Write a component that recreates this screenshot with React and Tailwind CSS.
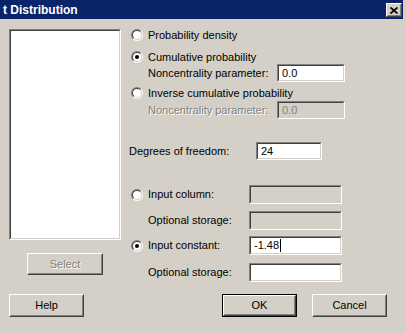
import React from "react";

function Sunken({ className = "", children, disabled, white = true }) {
  return (
    <div className={`border border-t-[#808080] border-l-[#808080] border-b-white border-r-white ${className}`}>
      <div
        className={`h-full w-full border border-t-[#404040] border-l-[#404040] border-b-[#d4d0c8] border-r-[#d4d0c8] flex items-center pl-[3px] text-[11px] leading-none ${
          disabled ? "bg-[#d4d0c8] text-[#808080]" : white ? "bg-white text-black" : ""
        }`}
      >
        {children}
      </div>
    </div>
  );
}

function Radio({ checked }) {
  return (
    <div className="w-[12px] h-[12px] rounded-full border border-t-[#808080] border-l-[#808080] border-b-white border-r-white shrink-0">
      <div className="w-full h-full rounded-full border border-t-[#404040] border-l-[#404040] border-b-[#d4d0c8] border-r-[#d4d0c8] bg-white flex items-center justify-center">
        {checked && <div className="w-[4px] h-[4px] rounded-full bg-black" />}
      </div>
    </div>
  );
}

function Raised({ children, className = "", disabled }) {
  return (
    <div className={`border border-t-white border-l-white border-b-[#404040] border-r-[#404040] ${className}`}>
      <div className="h-full w-full border border-t-[#d4d0c8] border-l-[#d4d0c8] border-b-[#808080] border-r-[#808080] flex items-center justify-center text-[11px] leading-none">
        {disabled ? (
          <span className="text-[#808080] [text-shadow:1px_1px_0_#ffffff]">{children}</span>
        ) : (
          <span className="text-black">{children}</span>
        )}
      </div>
    </div>
  );
}

function Button({ children, className = "", disabled, isDefault }) {
  if (isDefault) {
    return (
      <div className={`border border-black ${className}`}>
        <Raised className="h-full w-full">{children}</Raised>
      </div>
    );
  }
  return (
    <Raised className={className} disabled={disabled}>
      {children}
    </Raised>
  );
}

function RadioRow({ checked, label, className = "" }) {
  return (
    <div className={`flex items-center pl-[2px] ${className}`}>
      <Radio checked={checked} />
      <span className="ml-[5px] text-[11px] leading-none text-black">{label}</span>
    </div>
  );
}

export default function App() {
  return (
    <div className="w-[406px] h-[333px] bg-[#d4d0c8] overflow-hidden flex flex-col font-['Liberation_Sans',Arial,sans-serif]">
      <div className="h-[19px] w-[403px] bg-[#0a246a] flex items-start shrink-0">
        <span className="text-white font-bold text-[12px] leading-[14px] ml-[3px] mt-[3px]">t Distribution</span>
        <div className="ml-auto mr-[1px] mt-[3px] w-[16px] h-[14px] border border-t-white border-l-white border-b-[#404040] border-r-[#404040] bg-[#d4d0c8]">
          <div className="w-full h-full border border-t-[#d4d0c8] border-l-[#d4d0c8] border-b-[#808080] border-r-[#808080] flex items-center justify-center">
            <svg width="8" height="7" viewBox="0 0 8 7">
              <path d="M0.5 0.5 L7.5 6.5 M7.5 0.5 L0.5 6.5" stroke="black" strokeWidth="1.7" />
            </svg>
          </div>
        </div>
      </div>

      <div className="flex shrink-0">
        <div className="ml-[9px] mt-[10px] flex flex-col">
          <Sunken className="w-[112px] h-[211px]" />
          <Button className="ml-[18px] mt-[13px] w-[76px] h-[22px]" disabled>
            Select
          </Button>
        </div>

        <div className="ml-[8px] flex flex-col">
          <RadioRow className="mt-[8px] h-[16px]" label="Probability density" />
          <RadioRow className="mt-[7px] h-[14px]" checked label="Cumulative probability" />
          <div className="flex items-center h-[18px]">
            <span className="w-[148px] pl-[19px] text-[11px] leading-none">Noncentrality parameter:</span>
            <Sunken className="w-[68px] h-[18px]">0.0</Sunken>
          </div>
          <RadioRow className="mt-[4px] h-[14px]" label="Inverse cumulative probability" />
          <div className="flex items-center h-[18px] mt-[1px]">
            <span className="w-[148px] pl-[19px] text-[11px] leading-none text-[#808080] [text-shadow:1px_1px_0_#ffffff]">
              Noncentrality parameter:
            </span>
            <Sunken className="w-[68px] h-[18px]" disabled>
              0.0
            </Sunken>
          </div>

          <div className="flex items-center h-[18px] mt-[23px]">
            <span className="w-[127px] text-[11px] leading-none">Degrees of freedom:</span>
            <Sunken className="w-[66px] h-[18px]">24</Sunken>
          </div>

          <div className="flex items-center h-[19px] mt-[25px]">
            <div className="w-[120px]">
              <RadioRow label="Input column:" />
            </div>
            <Sunken className="w-[93px] h-[19px]" white={false} />
          </div>
          <div className="flex items-center h-[19px] mt-[7px]">
            <span className="w-[120px] pl-[19px] text-[11px] leading-none">Optional storage:</span>
            <Sunken className="w-[93px] h-[19px]" white={false} />
          </div>
          <div className="flex items-center h-[19px] mt-[6px]">
            <div className="w-[120px]">
              <RadioRow checked label="Input constant:" />
            </div>
            <Sunken className="w-[93px] h-[19px]">
              <span>-1.48</span>
              <span className="inline-block w-px h-[13px] bg-black ml-[1px]" />
            </Sunken>
          </div>
          <div className="flex items-center h-[19px] mt-[8px]">
            <span className="w-[120px] pl-[19px] text-[11px] leading-none">Optional storage:</span>
            <Sunken className="w-[93px] h-[19px]" />
          </div>
        </div>
      </div>

      <div className="flex mt-[12px] shrink-0">
        <Button className="ml-[9px] w-[75px] h-[23px]">Help</Button>
        <Button className="ml-[138px] w-[75px] h-[23px]" isDefault>
          OK
        </Button>
        <Button className="ml-[15px] w-[75px] h-[23px]">Cancel</Button>
      </div>
    </div>
  );
}
